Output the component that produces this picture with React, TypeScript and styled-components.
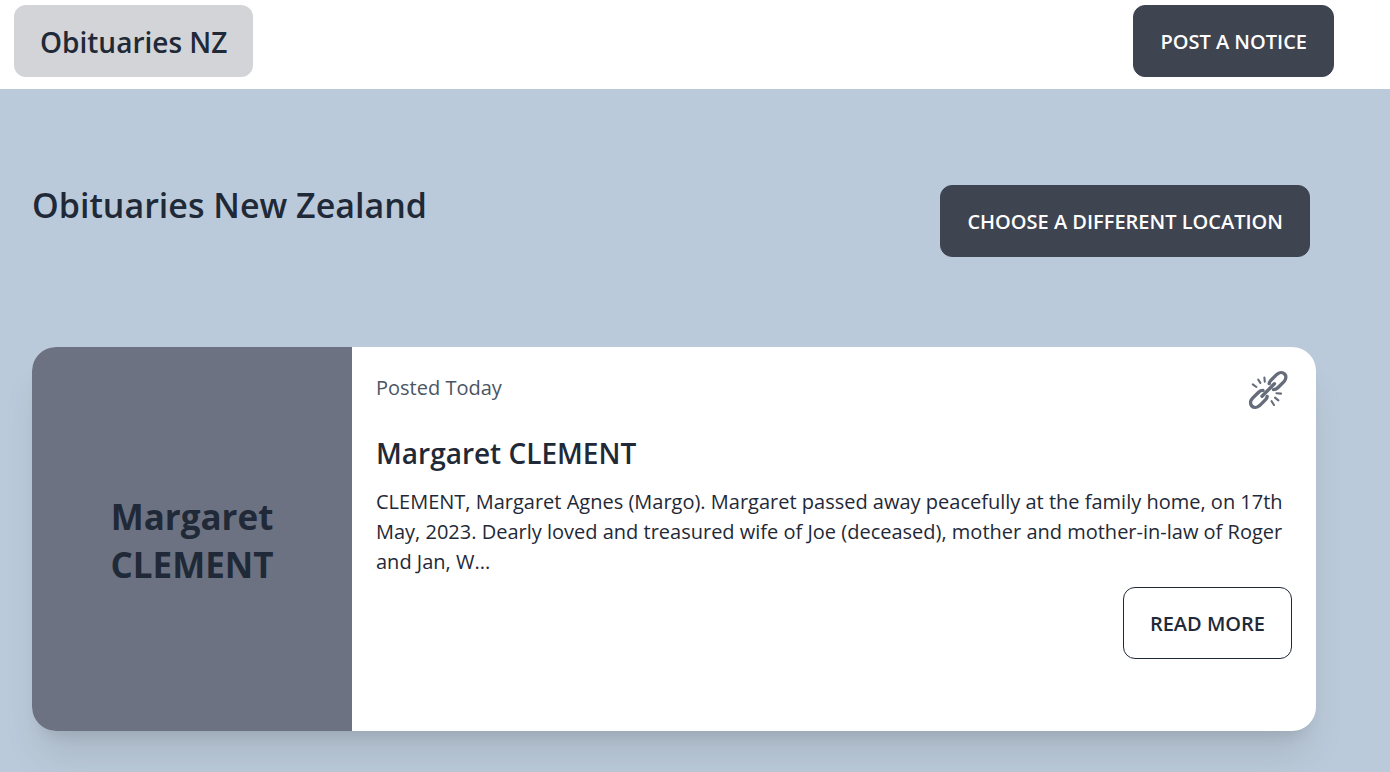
import React from "react";
import styled, { createGlobalStyle, css } from "styled-components";

const GlobalStyle = createGlobalStyle`
  *, *::before, *::after { box-sizing: border-box; }
  body {
    margin: 0;
    min-height: 100vh;
    background: #bbcada;
    color: #1f2937;
    font-family: "Segoe UI", "Open Sans", "Noto Sans", sans-serif;
    font-size: 20px;
    line-height: 30px;
  }
  h1, h2, p { margin: 0; }
`;

const Navbar = styled.header`
  display: flex;
  align-items: center;
  justify-content: space-between;
  padding: 5px 56px 12px 14px;
  background: #ffffff;
`;

const Brand = styled.a`
  display: flex;
  align-items: center;
  height: 72px;
  padding: 2px 26px 0;
  border-radius: 12px;
  background: #d2d4d8;
  color: #1f2937;
  font-size: 28px;
  font-weight: 600;
  line-height: 40px;
  text-decoration: none;
`;

const Button = styled.button<{ $outline?: boolean }>`
  flex-shrink: 0;
  height: 72px;
  padding: 2px 26px 0;
  border: 1px solid #3f4451;
  border-radius: 12px;
  background: #3f4451;
  color: #ffffff;
  font-family: inherit;
  font-size: 20px;
  font-weight: 600;
  line-height: 30px;
  text-transform: uppercase;
  cursor: pointer;

  ${(p) =>
    p.$outline &&
    css`
      border-color: #1f2937;
      background: transparent;
      color: #1f2937;
    `}
`;

const Main = styled.main`
  padding: 96px 74px 42px 32px;
`;

const PageHead = styled.div`
  display: flex;
  align-items: flex-start;
  justify-content: space-between;
  gap: 24px;
  padding-right: 6px;
  margin-bottom: 90px;
`;

const PageTitle = styled.h1`
  font-size: 34px;
  font-weight: 600;
  line-height: 40px;
`;

const Card = styled.article`
  display: flex;
  min-height: 384px;
  border-radius: 24px;
  overflow: hidden;
  background: #ffffff;
  box-shadow: 0 30px 38px -8px rgba(0, 0, 0, 0.1), 0 12px 15px -9px rgba(0, 0, 0, 0.1);
`;

const Portrait = styled.div`
  display: flex;
  flex: 0 0 320px;
  align-items: center;
  justify-content: center;
  padding: 4px 48px 0;
  background: #6c7281;
  font-size: 35px;
  font-weight: 700;
  line-height: 48px;
  text-align: center;
`;

const CardBody = styled.div`
  display: flex;
  flex: 1;
  flex-direction: column;
  padding: 24px;
`;

const CardTop = styled.div`
  display: flex;
  align-items: flex-start;
  justify-content: space-between;
  height: 62px;
`;

const Posted = styled.p`
  padding-top: 2px;
  color: #4b5563;
`;

const IconLink = styled.a`
  display: block;
  padding-right: 4px;
  color: #666c79;

  svg {
    display: block;
  }
`;

const CardTitle = styled.h2`
  margin-bottom: 14px;
  font-size: 28px;
  font-weight: 600;
  line-height: 40px;
`;

const Excerpt = styled.p`
  margin-bottom: 10px;
`;

const Actions = styled.div`
  display: flex;
  justify-content: flex-end;
`;

function ChainIcon() {
  return (
    <svg width="40" height="40" viewBox="0 1 40 40" overflow="visible" fill="none" stroke="currentColor" strokeLinecap="round" aria-hidden="true">
      <g strokeWidth="3.4">
        <path d="M21.2 13.6C21.4 12.4 21.8 11.4 22.6 10.6L28.8 4.4C31.2 2.2 34.6 2 36.6 4C38.4 6 38.2 9.2 36 11.6L29.8 17.8C28.6 19 27.2 19.6 25.4 19.6" />
        <path d="M19.2 26.4C19 27.6 18.6 28.6 17.8 29.4L11.6 35.6C9.2 37.8 5.8 38 3.8 36C2 34 2.2 30.8 4.4 28.4L10.6 22.2C11.8 21 13.2 20.4 15 20.4" />
        <path d="M14 26.2L26.4 13.8" />
      </g>
      <g strokeWidth="2.1">
        <path d="M4.8 14.4L8.4 17M10.2 9.6L12.4 12.8M16.4 7.6L16.8 11.6" />
        <path d="M28.4 23.2L33 23.6M27 27.6L30.4 30.4M23.6 31.2L26 35" />
      </g>
    </svg>
  );
}

export default function App() {
  return (
    <>
      <GlobalStyle />
      <Navbar>
        <Brand href="#">Obituaries NZ</Brand>
        <Button type="button">Post a notice</Button>
      </Navbar>
      <Main>
        <PageHead>
          <PageTitle>Obituaries New Zealand</PageTitle>
          <Button type="button">Choose a different location</Button>
        </PageHead>
        <Card>
          <Portrait>Margaret CLEMENT</Portrait>
          <CardBody>
            <CardTop>
              <Posted>Posted Today</Posted>
              <IconLink href="#" aria-label="Link to notice">
                <ChainIcon />
              </IconLink>
            </CardTop>
            <CardTitle>Margaret CLEMENT</CardTitle>
            <Excerpt>
              CLEMENT, Margaret Agnes (Margo). Margaret passed away peacefully at the family home, on 17th May, 2023.
              Dearly loved and treasured wife of Joe (deceased), mother and mother-in-law of Roger and Jan, W...
            </Excerpt>
            <Actions>
              <Button type="button" $outline>
                Read more
              </Button>
            </Actions>
          </CardBody>
        </Card>
      </Main>
    </>
  );
}
